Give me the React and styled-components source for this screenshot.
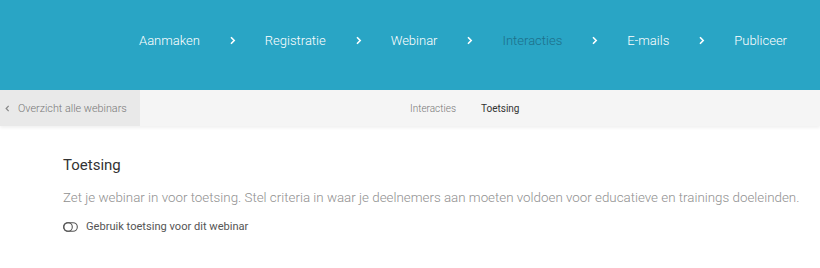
import React from "react";
import styled, { createGlobalStyle } from "styled-components";

const GlobalStyle = createGlobalStyle`
  body {
    margin: 0;
    font-family: Roboto, "Liberation Sans", sans-serif;
    background: #fff;
  }
`;

const Header = styled.header`
  height: 90px;
  background: #29a5c5;
  display: flex;
  align-items: center;
  justify-content: flex-end;
  padding-right: 33px;
  box-sizing: border-box;
`;

const Step = styled.span`
  font-size: 13px;
  font-weight: 300;
  color: ${(p) => (p.active ? "#1d6f8a" : "#fff")};
  line-height: 1;
  margin-top: -10px;
`;

const Chevron = styled.span`
  display: flex;
  margin: -10px 29px 0;
  svg {
    display: block;
  }
`;

const SubBar = styled.div`
  height: 36px;
  background: #f5f5f5;
  display: flex;
  position: relative;
  box-shadow: 0 2px 3px rgba(0, 0, 0, 0.06);
`;

const BackButton = styled.div`
  width: 140px;
  background: #e9e9e9;
  display: flex;
  align-items: center;
  padding-left: 5px;
  box-sizing: border-box;
  font-size: 10.8px;
  font-weight: 300;
  color: #777;
  gap: 8px;
`;

const Tabs = styled.div`
  flex: 1;
  display: flex;
  align-items: center;
  padding-left: 270px;
  gap: 25px;
`;

const Tab = styled.span`
  font-size: 10px;
  font-weight: ${(p) => (p.active ? 400 : 300)};
  color: ${(p) => (p.active ? "#333" : "#777")};
`;

const Content = styled.main`
  padding: 30px 0 0 63px;
`;

const Title = styled.h2`
  margin: 0;
  font-size: 15px;
  font-weight: 400;
  color: #333;
`;

const Description = styled.p`
  margin: 16px 0 0;
  font-size: 13.35px;
  font-weight: 300;
  color: #909090;
  white-space: nowrap;
`;

const ToggleRow = styled.label`
  display: flex;
  align-items: center;
  gap: 8px;
  margin-top: 15px;
  font-size: 11.1px;
  color: #555;
`;

const ChevronIcon = ({ dir = "right", color = "#fff", size = 7 }) => (
  <svg width={size} height={size + 2} viewBox="0 0 6 9">
    <path
      d={dir === "right" ? "M1.5 1.2 L4.7 4.5 L1.5 7.8" : "M4.5 1.2 L1.3 4.5 L4.5 7.8"}
      fill="none"
      stroke={color}
      strokeWidth="1.6"
    />
  </svg>
);

const ToggleIcon = () => (
  <svg width="15" height="10" viewBox="0 0 15 10">
    <rect x="0.7" y="0.7" width="13.6" height="8.6" rx="4.3" fill="none" stroke="#555" strokeWidth="1.1" />
    <circle cx="5" cy="5" r="4.3" fill="none" stroke="#555" strokeWidth="1.1" />
  </svg>
);

const steps = ["Aanmaken", "Registratie", "Webinar", "Interacties", "E-mails", "Publiceer"];

export default function App() {
  return (
    <>
      <GlobalStyle />
      <Header>
        {steps.map((s, i) => (
          <React.Fragment key={s}>
            {i > 0 && (
              <Chevron>
                <ChevronIcon />
              </Chevron>
            )}
            <Step active={s === "Interacties"}>{s}</Step>
          </React.Fragment>
        ))}
      </Header>
      <SubBar>
        <BackButton>
          <ChevronIcon dir="left" color="#888" size={5} />
          Overzicht alle webinars
        </BackButton>
        <Tabs>
          <Tab>Interacties</Tab>
          <Tab active>Toetsing</Tab>
        </Tabs>
      </SubBar>
      <Content>
        <Title>Toetsing</Title>
        <Description>
          Zet je webinar in voor toetsing. Stel criteria in waar je deelnemers aan moeten voldoen voor educatieve en trainings doeleinden.
        </Description>
        <ToggleRow>
          <ToggleIcon />
          Gebruik toetsing voor dit webinar
        </ToggleRow>
      </Content>
    </>
  );
}
